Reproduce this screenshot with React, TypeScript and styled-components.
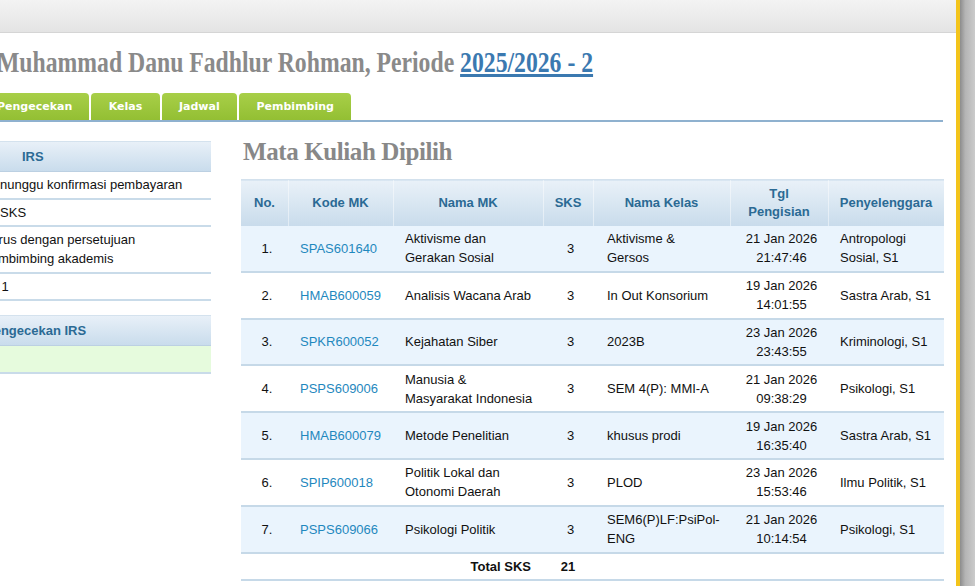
import React from "react";
import styled, { createGlobalStyle } from "styled-components";

const GlobalStyle = createGlobalStyle`
  html, body {
    margin: 0;
    padding: 0;
    height: 100%;
    overflow: hidden;
  }
  body {
    font-family: "Liberation Sans", Arial, sans-serif;
    background: #fff;
  }
  #root {
    height: 100%;
  }
`;

const courses = [
  { kode: "SPAS601640", nama: "Aktivisme dan Gerakan Sosial", sks: 3, kelas: "Aktivisme & Gersos", tgl: "21 Jan 2026", jam: "21:47:46", org: "Antropologi Sosial, S1" },
  { kode: "HMAB600059", nama: "Analisis Wacana Arab", sks: 3, kelas: "In Out Konsorium", tgl: "19 Jan 2026", jam: "14:01:55", org: "Sastra Arab, S1" },
  { kode: "SPKR600052", nama: "Kejahatan Siber", sks: 3, kelas: "2023B", tgl: "23 Jan 2026", jam: "23:43:55", org: "Kriminologi, S1" },
  { kode: "PSPS609006", nama: "Manusia & Masyarakat Indonesia", sks: 3, kelas: "SEM 4(P): MMI-A", tgl: "21 Jan 2026", jam: "09:38:29", org: "Psikologi, S1" },
  { kode: "HMAB600079", nama: "Metode Penelitian", sks: 3, kelas: "khusus prodi", tgl: "19 Jan 2026", jam: "16:35:40", org: "Sastra Arab, S1" },
  { kode: "SPIP600018", nama: "Politik Lokal dan Otonomi Daerah", sks: 3, kelas: "PLOD", tgl: "23 Jan 2026", jam: "15:53:46", org: "Ilmu Politik, S1" },
  { kode: "PSPS609066", nama: "Psikologi Politik", sks: 3, kelas: "SEM6(P)LF:PsiPol-ENG", tgl: "21 Jan 2026", jam: "10:14:54", org: "Psikologi, S1" },
];

const App = () => {
  return (
    <>
      <GlobalStyle />
      <Frame>
        <Main>
          <TopBar />
          <Page>
            <Title>
              <Condensed>
                Muhammad Danu Fadhlur Rohman, Periode <PeriodLink href="#">2025/2026 - 2</PeriodLink>
              </Condensed>
            </Title>

            <Tabs>
              <Tab>Pengecekan</Tab>
              <Tab>Kelas</Tab>
              <Tab>Jadwal</Tab>
              <Tab>Pembimbing</Tab>
            </Tabs>

            <Body>
              <Sidebar>
                <SideHead $indent={42}>IRS</SideHead>
                <SideRow>Menunggu konfirmasi pembayaran</SideRow>
                <SideRow>24 SKS</SideRow>
                <SideRow>
                  Harus dengan persetujuan
                  <br />
                  Pembimbing akademis
                </SideRow>
                <SideRow>Ke 1</SideRow>

                <SideHead $gap $indent={5}>Pengecekan IRS</SideHead>
                <SideRow $ok>&nbsp;</SideRow>
              </Sidebar>

              <Content>
                <SubTitle>Mata Kuliah Dipilih</SubTitle>
                <Table>
                  <thead>
                    <tr>
                      <Th $w={47}>No.</Th>
                      <Th $w={105}>Kode MK</Th>
                      <Th $w={150}>Nama MK</Th>
                      <Th $w={50}>SKS</Th>
                      <Th $w={137}>Nama Kelas</Th>
                      <Th $w={98}>
                        Tgl
                        <br />
                        Pengisian
                      </Th>
                      <Th $w={116}>Penyelenggara</Th>
                    </tr>
                  </thead>
                  <tbody>
                    {courses.map((c, i) => (
                      <Row key={c.kode} $odd={i % 2 === 0}>
                        <Td $align="center">{i + 1}.</Td>
                        <Td>
                          <CodeLink href="#">{c.kode}</CodeLink>
                        </Td>
                        <Td>{c.nama}</Td>
                        <Td $align="center">{c.sks}</Td>
                        <Td $pl={14} $pr={12}>
                          {c.kelas}
                        </Td>
                        <Td $align="center">
                          {c.tgl}
                          <br />
                          {c.jam}
                        </Td>
                        <Td>{c.org}</Td>
                      </Row>
                    ))}
                    <TotalRow>
                      <TotalCell colSpan={3} $align="right">
                        Total SKS
                      </TotalCell>
                      <TotalCell $align="center">21</TotalCell>
                      <TotalCell colSpan={3} />
                    </TotalRow>
                  </tbody>
                </Table>
              </Content>
            </Body>
          </Page>
        </Main>
        <ScrollStrip />
      </Frame>
    </>
  );
};

export default App;

const Frame = styled.div`
  display: flex;
  height: 586px;
  width: 975px;
`;

const Main = styled.div`
  flex: 1;
  min-width: 0;
  overflow: hidden;
  background-color: #fff;
  border-right: 4px solid #f3c41b;
`;

const ScrollStrip = styled.div`
  width: 15px;
  background: linear-gradient(to right, #8c8c8c, #b4b4b4 35%, #cbcbcb);
`;

const TopBar = styled.div`
  height: 32px;
  background: linear-gradient(#f3f3f3, #e4e4e4);
  border-bottom: 1px solid #d5d5d5;
`;

/* view is scrolled a little to the right, so the left edge is cut */
const Page = styled.div`
  margin-left: -20px;
`;

const Title = styled.h1`
  margin: 12px 0 0;
  padding-left: 17px;
  font-family: "Liberation Serif", "Times New Roman", serif;
  font-size: 30px;
  line-height: 34px;
  font-weight: bold;
  color: #8a8a8a;
  white-space: nowrap;
`;

const Condensed = styled.span`
  display: inline-block;
  transform: scaleX(0.79);
  transform-origin: left center;
`;

const PeriodLink = styled.a`
  color: #3b79b0;
  text-decoration: underline;
`;

const Tabs = styled.div`
  display: flex;
  gap: 2px;
  margin: 14px 13px 0 0;
  border-bottom: 2px solid #8fb1cf;
`;

const Tab = styled.div`
  height: 27px;
  padding: 0 17.4px;
  display: flex;
  align-items: center;
  background: linear-gradient(#a8cf48, #93bf33);
  border-radius: 4px 4px 0 0;
  color: #fff;
  font-family: "DejaVu Sans", Verdana, sans-serif;
  font-size: 11px;
  font-weight: bold;
  &:first-child {
    padding: 0 17px;
  }
`;

const Body = styled.div`
  display: flex;
  align-items: flex-start;
  gap: 30px;
  margin-right: 12px;
`;

const Sidebar = styled.div`
  width: 231px;
  flex-shrink: 0;
  margin-top: 19px;
  font-size: 13px;
  color: #111;
`;

const SideHead = styled.div<{ $gap?: boolean; $indent: number }>`
  height: 29px;
  margin-top: ${(p) => (p.$gap ? "14px" : "0")};
  padding-left: ${(p) => p.$indent}px;
  display: flex;
  align-items: center;
  background: linear-gradient(#e8f0f8, #c9dcec);
  border-top: 1px solid #d4e2ee;
  border-bottom: 1px solid #bcd0e2;
  color: #2b6a94;
  font-weight: bold;
  white-space: nowrap;
`;

const SideRow = styled.div<{ $ok?: boolean }>`
  padding: 3px 0 3.5px 2px;
  line-height: 19px;
  border-bottom: 2px solid #c9dbe9;
  background-color: ${(p) => (p.$ok ? "#e6fbdd" : "#fff")};
  white-space: nowrap;
`;

const Content = styled.div`
  flex: 1;
  min-width: 0;
  margin-top: 15px;
`;

const SubTitle = styled.h2`
  margin: 0 0 12px 2px;
  font-family: "Liberation Serif", "Times New Roman", serif;
  font-size: 25px;
  line-height: 30px;
  font-weight: bold;
  color: #888;
  letter-spacing: -0.4px;
`;

const Table = styled.table`
  width: 100%;
  border-collapse: collapse;
  table-layout: fixed;
  font-size: 13px;
`;

const Th = styled.th<{ $w: number }>`
  width: ${(p) => p.$w}px;
  height: 46px;
  padding: 0;
  background: linear-gradient(#e9f1f8, #c8dbeb);
  border-top: 1px solid #d3e1ed;
  box-shadow: inset 1px 0 0 rgba(255, 255, 255, 0.45);
  color: #2b6a94;
  font-weight: bold;
  line-height: 18px;
  text-align: center;
  vertical-align: middle;
  &:first-child {
    box-shadow: none;
  }
`;

const Row = styled.tr<{ $odd: boolean }>`
  background-color: ${(p) => (p.$odd ? "#eaf4fd" : "#fff")};
`;

const Td = styled.td<{ $align?: string; $pl?: number; $pr?: number }>`
  height: 44.8px;
  padding: 0 ${(p) => p.$pr ?? 7}px 0 ${(p) => p.$pl ?? 12}px;
  line-height: 19px;
  border-bottom: 2px solid #c6d9e8;
  color: #111;
  text-align: ${(p) => p.$align || "left"};
  vertical-align: middle;
`;

const CodeLink = styled.a`
  color: #1f88be;
  text-decoration: none;
`;

const TotalRow = styled.tr`
  background-color: #fff;
`;

const TotalCell = styled.td<{ $align?: string }>`
  height: 25px;
  padding: 0 12px;
  border-bottom: 2px solid #c6d9e8;
  font-weight: bold;
  color: #111;
  text-align: ${(p) => p.$align || "left"};
`;
